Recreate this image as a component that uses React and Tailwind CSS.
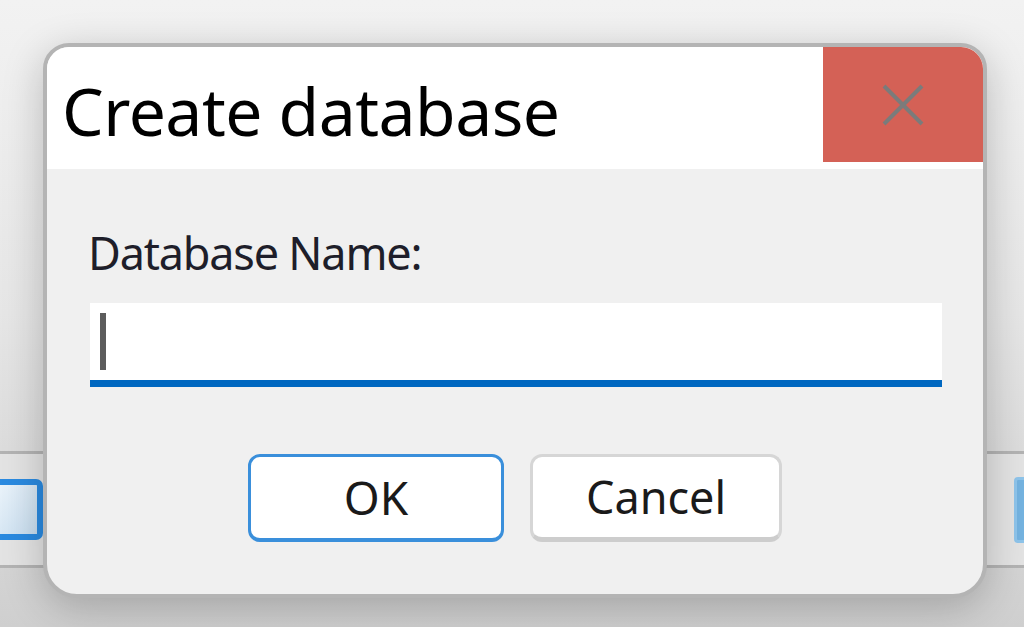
import React from "react";

const CloseIcon = () => (
  <svg width="42" height="42" viewBox="0 0 42 42">
    <path d="M2 2 L40 40 M40 2 L2 40" stroke="#7b7b7b" strokeWidth="4" />
  </svg>
);

const App = () => {
  return (
    <main
      className="relative w-[1024px] h-[627px] overflow-hidden bg-gradient-to-b from-[#f2f2f2] via-[#e6e6e6] to-[#cfcfcf]"
      style={{ fontFamily: '"Noto Sans", "Open Sans", sans-serif' }}
    >
      {/* window behind the dialog */}
      <div className="flex flex-col h-full">
        <div className="h-[451px]" />
        <div className="h-[117px] border-y-[3px] border-[#b3b3b3] bg-[#e3e3e3] flex items-center justify-between">
          <div className="w-[43px] h-[61px] rounded-r-[7px] border-[6px] border-l-0 border-[#2a8ae0] bg-gradient-to-br from-[#eaf3fa] to-[#c6dcee]" />
          <div className="w-[10px] h-[66px] rounded-l-[4px] border-[3px] border-r-0 border-[#8ec4ea] bg-[#74b3e0]" />
        </div>
        <div className="flex-1" />
      </div>

      {/* dialog */}
      <div className="absolute left-[43px] top-[43px] w-[944px] h-[555px] flex flex-col overflow-hidden rounded-t-[26px] rounded-b-[34px] border-4 border-[#b4b4b4] bg-[#f0f0f0] shadow-[0_10px_40px_rgba(0,0,0,0.22)]">
        <div className="h-[122px] bg-white flex items-start">
          <h1 className="pl-[15px] pt-[23px] text-[66px] leading-[80px] text-black tracking-[-0.5px]">
            Create database
          </h1>
          <button className="ml-auto w-[160px] h-[115px] bg-[#d46156] flex items-center justify-center">
            <CloseIcon />
          </button>
        </div>
        <div className="flex-1 flex flex-col pl-[41px] pr-[41px]">
          <label className="pt-[54px] text-[45px] leading-[60px] text-[#1e1e2a] tracking-[-1.2px]">
            Database Name:
          </label>
          <div className="mt-[20px] ml-[2px] w-[852px] h-[84px] bg-white border-b-[7px] border-[#0067c0] flex items-center pl-[10px]">
            <span className="w-[6px] h-[57px] bg-[#5c5c5c]" />
          </div>
          <div className="mt-[67px] flex justify-center gap-[26px]">
            <button className="w-[256px] h-[88px] rounded-[12px] border-[3px] border-[#3a8fdb] border-b-[4px] bg-white text-[46px] text-[#1a1a1a]">
              OK
            </button>
            <button className="w-[252px] h-[88px] rounded-[12px] border-[3px] border-[#d6d6d6] border-b-[5px] border-b-[#cdcdcd] bg-white text-[45px] text-[#1a1a1a]">
              Cancel
            </button>
          </div>
        </div>
      </div>
    </main>
  );
};

export default App;
